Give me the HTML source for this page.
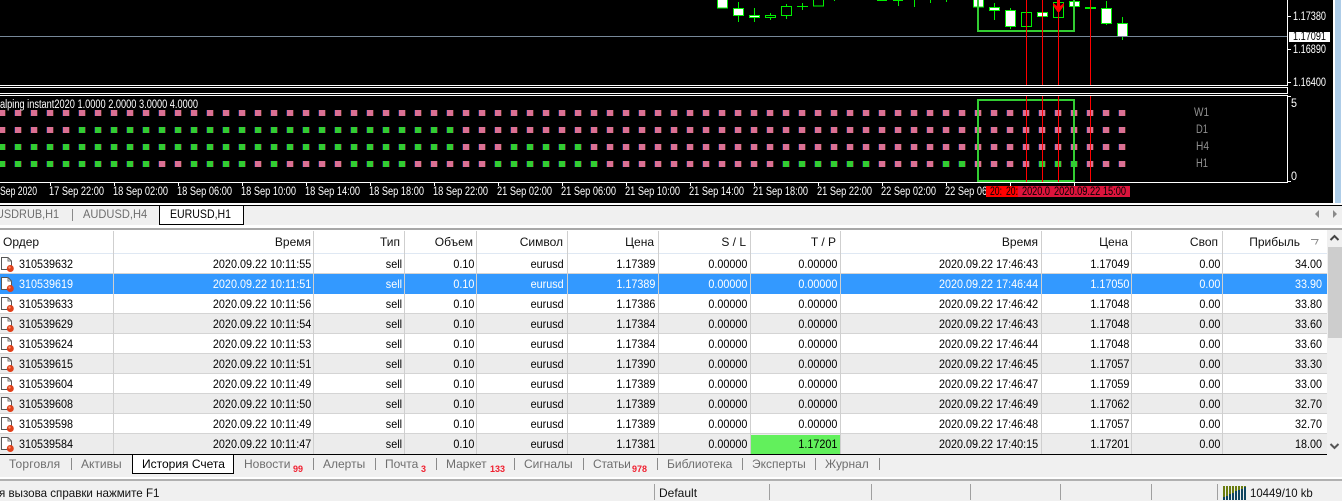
<!DOCTYPE html>
<html><head><meta charset="utf-8"><style>
html,body{margin:0;padding:0;background:#f0f0f0}
body{width:1342px;height:500px;position:relative;overflow:hidden;font:12px "Liberation Sans",sans-serif;color:#000}
.a{position:absolute}
#chart{position:absolute;left:0;top:0}
#chart text{font:11.5px "Liberation Sans",sans-serif;fill:#fff}
.t{position:absolute;white-space:nowrap;color:#6e6e6e;line-height:16px}
.x{transform:scaleX(.9);transform-origin:0 50%}
.s{position:absolute;width:1px;background:#8a8a8a}
.n{position:absolute;color:#f02030;font:bold 9px "Liberation Sans",sans-serif;line-height:10px}
.h span{position:absolute;top:233px;line-height:18px;white-space:nowrap;color:#111}
.v{position:absolute;top:231px;height:223px;width:1px;background:#cfcfcf}
.r{position:absolute;left:0;width:1342px;height:20px;background:#fff;box-sizing:border-box;border-bottom:1px solid #d4d4d4}
.r.g{background:#ececec}
.r.b{background:#3399ff;border-bottom-color:#3399ff;color:#fff}
.r span{position:absolute;top:0;line-height:21px;white-space:nowrap;transform:scaleX(.9);transform-origin:100% 50%}
.r span:nth-child(2){left:19px;transform-origin:0 50%}
.r span:nth-child(3){right:1031px}.r span:nth-child(4){right:940px}.r span:nth-child(5){right:868px}
.r span:nth-child(6){right:778px}.r span:nth-child(7){right:687px}.r span:nth-child(8){right:595px}
.r span:nth-child(9){right:505px}.r span:nth-child(10){right:304px}.r span:nth-child(11){right:213px}
.r span:nth-child(12){right:122px}.r span:nth-child(13){right:20px}
.r svg{position:absolute;left:0;top:2px}
</style></head><body>

<svg id="chart" width="1342" height="205" viewBox="0 0 1342 205" xmlns="http://www.w3.org/2000/svg">
<rect width="1342" height="204" fill="#000"/>
<rect x="1333" y="0" width="9" height="204" fill="#fff"/>
<rect x="1335" y="0" width="6" height="204" fill="#aecde8"/>

<!-- candles -->
<g stroke="#00f000" stroke-width="1" fill="none" shape-rendering="crispEdges">
<path d="M738.500 2V22M754.500 8V22M770.500 13V20M786.500 4V19M802.500 3V10M797 6.500H808M834.500 0V1M898.500 0V6M914.500 0V7M930.500 0V3M946.500 0V2M994.500 3V20M1010.500 8V29M1042.500 12V18M1106.500 1V25M1122.500 17V40"/>
<path d="M877 0.500H887M893 0.500H903M1085 7.500H1096M1085 8.500H1096"/>
<rect x="717.500" y="-2" width="10" height="10" fill="#fff"/>
<rect x="733.500" y="8.500" width="10" height="7" fill="#fff"/>
<rect x="749.500" y="15.500" width="10" height="2" fill="#fff"/>
<rect x="765.500" y="15.500" width="10" height="2" fill="#000"/>
<rect x="781.500" y="6.500" width="10" height="9" fill="#000"/>
<rect x="813.500" y="-2" width="10" height="8" fill="#000"/>
<rect x="973.500" y="-2" width="10" height="9" fill="#fff"/>
<rect x="989.500" y="7.500" width="10" height="3" fill="#fff"/>
<rect x="1005.500" y="10.500" width="10" height="16" fill="#fff"/>
<rect x="1021.500" y="12.500" width="10" height="14" fill="#000"/>
<rect x="1037.500" y="12.500" width="10" height="4" fill="#fff"/>
<rect x="1053.500" y="2.500" width="10" height="15" fill="#000"/>
<rect x="1069.500" y="1.500" width="10" height="5" fill="#fff"/>
<rect x="1101.500" y="8.500" width="10" height="15" fill="#fff"/>
<rect x="1117.500" y="23.500" width="10" height="13" fill="#fff"/>
</g>

<!-- price line -->
<rect x="0" y="36" width="1287" height="1" fill="#778899"/>

<!-- frame lines -->
<g fill="#fff">
<rect x="0" y="85" width="1288" height="1"/>
<rect x="0" y="87" width="1288" height="1"/>
<rect x="0" y="93" width="1288" height="1"/>
<rect x="0" y="95" width="1288" height="1"/>
<rect x="0" y="182" width="1288" height="1"/>
<rect x="1287" y="0" width="1" height="86"/>
<rect x="1287" y="87" width="1" height="7"/>
<rect x="1287" y="95" width="1" height="88"/>
<rect x="1288" y="16" width="3" height="1"/>
<rect x="1288" y="49" width="3" height="1"/>
<rect x="1288" y="82" width="3" height="1"/>
<rect x="1288" y="96" width="3" height="1"/>
<rect x="1288" y="181" width="3" height="1"/>
<path d="M50 183h1v3h-1zM114 183h1v3h-1zM178 183h1v3h-1zM242 183h1v3h-1zM306 183h1v3h-1zM370 183h1v3h-1zM434 183h1v3h-1zM498 183h1v3h-1zM562 183h1v3h-1zM626 183h1v3h-1zM690 183h1v3h-1zM754 183h1v3h-1zM818 183h1v3h-1zM882 183h1v3h-1zM946 183h1v3h-1zM1010 183h1v3h-1zM1074 183h1v3h-1z"/>
</g>

<!-- indicator dots -->
<g fill="none" stroke-width="6">
<path stroke="#db7093" stroke-dasharray="6 10" d="M-1 113H1125M-1 130H1125M-1 147H1125M-1 164H1125"/>
<path stroke="#32cd32" stroke-dasharray="6 10" d="M79 130H453M-1 147H453M511 147H581M-1 164H149M191 164H245M271 164H277M351 164H405M495 164H597M783 164H869M943 164H965M1039 164H1077"/>
<path stroke="#0c1f58" stroke-width="6" stroke-dasharray="1 15" d="M-2 113H1125M-2 130H1125M-2 147H1125M-2 164H1125"/>
<path stroke="#4a2418" stroke-width="6" stroke-dasharray="1 15" d="M5 113H1127M5 130H1127M5 147H1127M5 164H1127"/>
</g>

<!-- boxes and red lines -->
<g fill="none" stroke="#32cd32" stroke-width="2" shape-rendering="crispEdges">
<path d="M978 0V31H1074V0"/>
<rect x="978" y="100" width="96" height="81"/>
</g>
<g fill="#ff0000">
<rect x="1026" y="0" width="1" height="85"/><rect x="1042" y="0" width="1" height="85"/><rect x="1058" y="0" width="1" height="85"/><rect x="1090" y="0" width="1" height="85"/>
<rect x="1026" y="96" width="1" height="86"/><rect x="1042" y="96" width="1" height="86"/><rect x="1058" y="96" width="1" height="86"/><rect x="1090" y="96" width="1" height="86"/>
<path d="M1057 0h3v6l4-3v2.500l-4.500 6.500h-2L1053 5.500V3l4 3z"/>
</g>

<!-- price labels -->
<text x="1293" y="20" textLength="33" lengthAdjust="spacingAndGlyphs">1.17380</text>
<text x="1293" y="53" textLength="33" lengthAdjust="spacingAndGlyphs">1.16890</text>
<text x="1293" y="86" textLength="33" lengthAdjust="spacingAndGlyphs">1.16400</text>
<rect x="1289" y="32" width="41" height="10" fill="#fff"/>
<text x="1293" y="40" textLength="33" lengthAdjust="spacingAndGlyphs" style="fill:#000">1.17091</text>
<text x="1291" y="107" textLength="6" lengthAdjust="spacingAndGlyphs">5</text>
<text x="1291" y="180" textLength="6" lengthAdjust="spacingAndGlyphs">0</text>

<text x="0" y="108" textLength="198" lengthAdjust="spacingAndGlyphs">alping instant2020 1.0000 2.0000 3.0000 4.0000</text>
<text x="1194" y="116" textLength="15" lengthAdjust="spacingAndGlyphs" style="fill:#909090">W1</text>
<text x="1196" y="133" textLength="12" lengthAdjust="spacingAndGlyphs" style="fill:#909090">D1</text>
<text x="1196" y="150" textLength="13" lengthAdjust="spacingAndGlyphs" style="fill:#909090">H4</text>
<text x="1196" y="167" textLength="12" lengthAdjust="spacingAndGlyphs" style="fill:#909090">H1</text>

<!-- time labels -->
<text x="0" y="195" textLength="37" lengthAdjust="spacingAndGlyphs">Sep 2020</text>
<text x="49" y="195" textLength="55" lengthAdjust="spacingAndGlyphs">17 Sep 22:00</text>
<text x="113" y="195" textLength="55" lengthAdjust="spacingAndGlyphs">18 Sep 02:00</text>
<text x="177" y="195" textLength="55" lengthAdjust="spacingAndGlyphs">18 Sep 06:00</text>
<text x="241" y="195" textLength="55" lengthAdjust="spacingAndGlyphs">18 Sep 10:00</text>
<text x="305" y="195" textLength="55" lengthAdjust="spacingAndGlyphs">18 Sep 14:00</text>
<text x="369" y="195" textLength="55" lengthAdjust="spacingAndGlyphs">18 Sep 18:00</text>
<text x="433" y="195" textLength="55" lengthAdjust="spacingAndGlyphs">18 Sep 22:00</text>
<text x="497" y="195" textLength="55" lengthAdjust="spacingAndGlyphs">21 Sep 02:00</text>
<text x="561" y="195" textLength="55" lengthAdjust="spacingAndGlyphs">21 Sep 06:00</text>
<text x="625" y="195" textLength="55" lengthAdjust="spacingAndGlyphs">21 Sep 10:00</text>
<text x="689" y="195" textLength="55" lengthAdjust="spacingAndGlyphs">21 Sep 14:00</text>
<text x="753" y="195" textLength="55" lengthAdjust="spacingAndGlyphs">21 Sep 18:00</text>
<text x="817" y="195" textLength="55" lengthAdjust="spacingAndGlyphs">21 Sep 22:00</text>
<text x="881" y="195" textLength="55" lengthAdjust="spacingAndGlyphs">22 Sep 02:00</text>
<text x="945" y="195" textLength="55" lengthAdjust="spacingAndGlyphs">22 Sep 06:00</text>

<rect x="986" y="186" width="32" height="11" fill="#ff0000"/>
<rect x="1018" y="186" width="112" height="11" fill="#dc143c"/>
<text x="990" y="195" textLength="12" lengthAdjust="spacingAndGlyphs" style="fill:#000">20:</text>
<text x="1006" y="195" textLength="12" lengthAdjust="spacingAndGlyphs" style="fill:#000">20:</text>
<text x="1022" y="195" textLength="28" lengthAdjust="spacingAndGlyphs" style="fill:#000">2020.0</text>
<text x="1054" y="195" textLength="72" lengthAdjust="spacingAndGlyphs" style="fill:#000">2020.09.22 15:00</text>
<rect x="0" y="203" width="1342" height="2" fill="#fff"/>
</svg>

<!-- chart tab bar -->
<div class="a" style="left:0;top:205px;width:1342px;height:1px;background:#000"></div>
<div class="a" style="left:0;top:206px;width:1342px;height:19px;background:#f0f0f0"></div>
<div class="a" style="left:159px;top:205px;width:83px;height:18px;background:#fff;border:1px solid #000"></div>
<div class="t x" style="left:-4px;top:206px;transform:scaleX(.91)">USDRUB,H1</div>
<div class="s" style="left:72px;top:209px;height:12px"></div>
<div class="t x" style="left:83px;top:206px;transform:scaleX(.925)">AUDUSD,H4</div>
<div class="t x" style="left:170px;top:206px;color:#000;transform:scaleX(.88)">EURUSD,H1</div>
<svg class="a" style="left:1310px;top:208px" width="32" height="12"><path d="M9 2v8L5 6z" fill="#8a8a8a"/><path d="M23 2v8l4-4z" fill="#8a8a8a"/></svg>
<div class="a" style="left:0;top:225px;width:1342px;height:3px;background:#fff"></div>
<div class="a" style="left:0;top:228px;width:1342px;height:2px;background:#a8a8a8"></div>

<!-- table header -->
<div class="a" style="left:0;top:230px;width:1327px;height:24px;background:#fff"></div>
<div class="a" style="left:0;top:253px;width:1327px;height:1px;background:#dfe8f3"></div>
<div class="h">
<span style="left:3px">Ордер</span>
<span style="right:1031px">Время</span>
<span style="right:942px">Тип</span>
<span style="right:869px">Объем</span>
<span style="right:779px">Символ</span>
<span style="right:688px">Цена</span>
<span style="right:596px">S / L</span>
<span style="right:506px">T / P</span>
<span style="right:304px">Время</span>
<span style="right:214px">Цена</span>
<span style="right:124px">Своп</span>
<span style="right:42px">Прибыль</span>
</div>

<!-- rows -->
<svg width="0" height="0" style="position:absolute"><defs>
<g id="doc"><path d="M1.500 1.500H8L11.500 5V13.500H1.500Z" fill="#fff" stroke="#555"/><path d="M8 1.500V5H11.500" fill="none" stroke="#777"/><circle cx="10.300" cy="12.500" r="3.500" fill="#e0401a"/><circle cx="9.500" cy="11.500" r="1.200" fill="#f59070"/></g>
</defs></svg>

<div class="r" style="top:254px"><svg width="15" height="17"><use href="#doc"/></svg><span>310539632</span><span>2020.09.22 10:11:55</span><span>sell</span><span>0.10</span><span>eurusd</span><span>1.17389</span><span>0.00000</span><span>0.00000</span><span>2020.09.22 17:46:43</span><span>1.17049</span><span>0.00</span><span>34.00</span></div>
<div class="r b" style="top:274px"><svg width="15" height="17"><use href="#doc"/></svg><span>310539619</span><span>2020.09.22 10:11:51</span><span>sell</span><span>0.10</span><span>eurusd</span><span>1.17389</span><span>0.00000</span><span>0.00000</span><span>2020.09.22 17:46:44</span><span>1.17050</span><span>0.00</span><span>33.90</span></div>
<div class="r" style="top:294px"><svg width="15" height="17"><use href="#doc"/></svg><span>310539633</span><span>2020.09.22 10:11:56</span><span>sell</span><span>0.10</span><span>eurusd</span><span>1.17386</span><span>0.00000</span><span>0.00000</span><span>2020.09.22 17:46:42</span><span>1.17048</span><span>0.00</span><span>33.80</span></div>
<div class="r g" style="top:314px"><svg width="15" height="17"><use href="#doc"/></svg><span>310539629</span><span>2020.09.22 10:11:54</span><span>sell</span><span>0.10</span><span>eurusd</span><span>1.17384</span><span>0.00000</span><span>0.00000</span><span>2020.09.22 17:46:43</span><span>1.17048</span><span>0.00</span><span>33.60</span></div>
<div class="r" style="top:334px"><svg width="15" height="17"><use href="#doc"/></svg><span>310539624</span><span>2020.09.22 10:11:53</span><span>sell</span><span>0.10</span><span>eurusd</span><span>1.17384</span><span>0.00000</span><span>0.00000</span><span>2020.09.22 17:46:44</span><span>1.17048</span><span>0.00</span><span>33.60</span></div>
<div class="r g" style="top:354px"><svg width="15" height="17"><use href="#doc"/></svg><span>310539615</span><span>2020.09.22 10:11:51</span><span>sell</span><span>0.10</span><span>eurusd</span><span>1.17390</span><span>0.00000</span><span>0.00000</span><span>2020.09.22 17:46:45</span><span>1.17057</span><span>0.00</span><span>33.30</span></div>
<div class="r" style="top:374px"><svg width="15" height="17"><use href="#doc"/></svg><span>310539604</span><span>2020.09.22 10:11:49</span><span>sell</span><span>0.10</span><span>eurusd</span><span>1.17389</span><span>0.00000</span><span>0.00000</span><span>2020.09.22 17:46:47</span><span>1.17059</span><span>0.00</span><span>33.00</span></div>
<div class="r g" style="top:394px"><svg width="15" height="17"><use href="#doc"/></svg><span>310539608</span><span>2020.09.22 10:11:50</span><span>sell</span><span>0.10</span><span>eurusd</span><span>1.17389</span><span>0.00000</span><span>0.00000</span><span>2020.09.22 17:46:49</span><span>1.17062</span><span>0.00</span><span>32.70</span></div>
<div class="r" style="top:414px"><svg width="15" height="17"><use href="#doc"/></svg><span>310539598</span><span>2020.09.22 10:11:49</span><span>sell</span><span>0.10</span><span>eurusd</span><span>1.17389</span><span>0.00000</span><span>0.00000</span><span>2020.09.22 17:46:48</span><span>1.17057</span><span>0.00</span><span>32.70</span></div>
<div class="a" style="left:0;top:434px;width:1327px;height:20px;background:#ececec"></div>
<div class="a" style="left:751px;top:435px;width:89px;height:19px;background:#62f05c"></div>
<div class="r g" style="top:434px;background:transparent;border:0"><svg width="15" height="17"><use href="#doc"/></svg><span>310539584</span><span>2020.09.22 10:11:47</span><span>sell</span><span>0.10</span><span>eurusd</span><span>1.17381</span><span>0.00000</span><span>1.17201</span><span>2020.09.22 17:40:15</span><span>1.17201</span><span>0.00</span><span>18.00</span></div>

<!-- grid -->
<div class="v" style="left:113px"></div><div class="v" style="left:313px"></div><div class="v" style="left:404px"></div><div class="v" style="left:476px"></div><div class="v" style="left:567px"></div><div class="v" style="left:658px"></div><div class="v" style="left:750px"></div><div class="v" style="left:840px"></div><div class="v" style="left:1041px"></div><div class="v" style="left:1131px"></div><div class="v" style="left:1222px"></div>

<svg class="a" style="left:1310px;top:238px" width="10" height="8"><path d="M1 1.500H8L5.500 6.500" fill="none" stroke="#8c8c8c"/></svg>

<!-- scrollbar -->
<div class="a" style="left:1327px;top:230px;width:15px;height:224px;background:#f0f0f0"></div>
<div class="a" style="left:1328px;top:247px;width:14px;height:91px;background:#cdcdcd"></div>
<svg class="a" style="left:1327px;top:232px" width="15" height="12"><path d="M3.500 8L7.500 4l4 4" fill="none" stroke="#444" stroke-width="2"/></svg>
<svg class="a" style="left:1327px;top:440px" width="15" height="12"><path d="M3.500 4l4 4 4-4" fill="none" stroke="#555" stroke-width="2"/></svg>

<!-- bottom tabs -->
<div class="a" style="left:0;top:454px;width:1327px;height:1px;background:#000"></div>
<div class="a" style="left:0;top:455px;width:1342px;height:22px;background:#f0f0f0"></div>
<div class="a" style="left:132px;top:454px;width:100px;height:18px;background:#fff;border:1px solid #000"></div>
<div class="t" style="left:9px;top:456px;letter-spacing:.15px">Торговля</div>
<div class="s" style="left:71px;top:458px;height:12px"></div>
<div class="t" style="left:81px;top:456px">Активы</div>
<div class="t" style="left:142px;top:456px;color:#000">История Счета</div>
<div class="t" style="left:244px;top:456px">Новости</div><div class="n" style="left:293px;top:464px">99</div>
<div class="s" style="left:313px;top:458px;height:12px"></div>
<div class="t" style="left:323px;top:456px">Алерты</div>
<div class="s" style="left:375px;top:458px;height:12px"></div>
<div class="t" style="left:385px;top:456px">Почта</div><div class="n" style="left:421px;top:464px">3</div>
<div class="s" style="left:436px;top:458px;height:12px"></div>
<div class="t" style="left:446px;top:456px">Маркет</div><div class="n" style="left:490px;top:464px">133</div>
<div class="s" style="left:514px;top:458px;height:12px"></div>
<div class="t" style="left:524px;top:456px">Сигналы</div>
<div class="s" style="left:583px;top:458px;height:12px"></div>
<div class="t" style="left:593px;top:456px;letter-spacing:-.2px">Статьи</div><div class="n" style="left:632px;top:464px">978</div>
<div class="s" style="left:657px;top:458px;height:12px"></div>
<div class="t" style="left:667px;top:456px">Библиотека</div>
<div class="s" style="left:742px;top:458px;height:12px"></div>
<div class="t" style="left:752px;top:456px">Эксперты</div>
<div class="s" style="left:815px;top:458px;height:12px"></div>
<div class="t" style="left:825px;top:456px">Журнал</div>
<div class="s" style="left:879px;top:458px;height:12px"></div>

<!-- status bar -->
<div class="a" style="left:0;top:477px;width:1342px;height:2px;background:#fff"></div>
<div class="a" style="left:0;top:479px;width:1342px;height:2px;background:#b0b0b0"></div>
<div class="a" style="left:0;top:481px;width:1342px;height:19px;background:#f0f0f0"></div>
<div class="t" style="left:-1px;top:485px;color:#111;transform:scaleX(.965);transform-origin:0 50%">я вызова справки нажмите F1</div>
<div class="t" style="left:659px;top:485px;color:#111">Default</div>
<div class="t" style="left:1250px;top:485px;color:#111;transform:scaleX(.95);transform-origin:0 50%">10449/10 kb</div>
<div class="s" style="left:654px;top:484px;height:16px;background:#a0a0a0"></div>
<div class="s" style="left:769px;top:484px;height:16px;background:#a0a0a0"></div>
<div class="s" style="left:871px;top:484px;height:16px;background:#a0a0a0"></div>
<div class="s" style="left:970px;top:484px;height:16px;background:#a0a0a0"></div>
<div class="s" style="left:1060px;top:484px;height:16px;background:#a0a0a0"></div>
<div class="s" style="left:1151px;top:484px;height:16px;background:#a0a0a0"></div>
<div class="s" style="left:1217px;top:484px;height:16px;background:#a0a0a0"></div>
<svg class="a" style="left:1223px;top:486px" width="24" height="14" shape-rendering="crispEdges">
<path d="M0 0h2v11H0zM3 0h2v10H3zM6 0h2v8H6zM9 0h2v7H9zM12 0h2v5h-2zM15 0h2v4h-2zM18 0h2v3h-2zM21 0h2v1h-2z" fill="#6b7d10"/>
<path d="M0 11h2v3H0zM3 10h2v4H3zM6 8h2v6H6zM9 7h2v7H9zM12 5h2v9h-2zM15 4h2v10h-2zM18 3h2v11h-2zM21 1h2v13h-2z" fill="#0f4560"/>
</svg>
</body></html>
